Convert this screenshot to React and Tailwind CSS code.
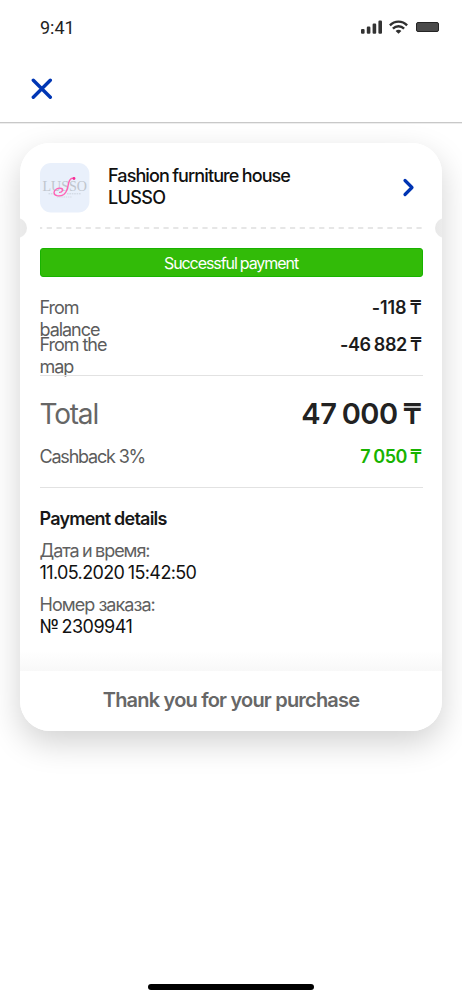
import React from 'react';

const balanceRows = [
  { label: 'From balance', value: '-118 ₸', valueSpacing: 'tracking-[-0.15px] [word-spacing:-1px]' },
  { label: 'From the map', value: '-46 882 ₸', valueSpacing: 'tracking-[-0.4px] [word-spacing:-1px]' },
];

const details = [
  { label: 'Дата и время:', value: '11.05.2020 15:42:50', labelSpacing: 'tracking-[-1.05px] [word-spacing:-0.6px]', valueSpacing: 'tracking-[-0.62px] [word-spacing:-1px]' },
  { label: 'Номер заказа:', value: '№ 2309941', labelSpacing: 'tracking-[-0.95px]', valueSpacing: 'tracking-[-0.55px] [word-spacing:-1.5px]' },
];

function StatusBar() {
  return (
    <div className="flex h-[56px] items-center justify-between pl-[40px] pr-[23px]">
      <span className="font-['Roboto'] text-[18px] leading-[22px] text-[#222]">9:41</span>
      <div className="flex items-center pb-[2px]">
        <svg width="22" height="14" viewBox="0 0 22 14" fill="#333">
          <rect x="0" y="9" width="3.6" height="4.8" rx="1.1" />
          <rect x="5.8" y="6.6" width="3.6" height="7.2" rx="1.1" />
          <rect x="11.6" y="3.6" width="3.6" height="10.2" rx="1.1" />
          <rect x="17.4" y="0.6" width="3.6" height="13.2" rx="1.1" />
        </svg>
        <svg className="ml-[6px]" width="19" height="14" viewBox="0 0 19 14" fill="none" stroke="#303030" strokeWidth="2.4">
          <path d="M0.9 5.4C5.8 0.4 13.2 0.4 18.1 5.4" />
          <path d="M3.9 8.6C7.1 5.5 11.9 5.5 15.1 8.6" />
          <path d="M6.6 10.9C8.3 9.5 10.7 9.5 12.4 10.9L9.5 13.8Z" fill="#303030" stroke="none" />
        </svg>
        <span className="ml-[8px] h-[10px] w-[23px] rounded-[2px] border border-[#242424] bg-[#4a4a4a]" />
      </div>
    </div>
  );
}

function LussoLogo() {
  return (
    <svg className="shrink-0" width="50" height="50" viewBox="0 0 50 50">
      <rect width="49.4" height="49.4" rx="11" fill="#e9f0fb" />
      <text x="2.5" y="27.5" fontFamily="Liberation Serif, serif" fontSize="14.5" fill="#bfc5cd" textLength="44.5" lengthAdjust="spacingAndGlyphs">
        LUSSO
      </text>
      <path
        d="M34 15.6C31.5 14.2 29.5 16.5 28.6 20C27.7 24 27.8 28.5 23.8 31.5C20 34 14.2 33.2 14 29.8C13.9 26.5 18.3 24.4 21.4 25.5C23.5 26.4 22.5 29.3 19.6 29.4"
        fill="none"
        stroke="#ff62b4"
        strokeWidth="1.4"
        strokeLinecap="round"
      />
      <circle cx="34" cy="15.5" r="1.4" fill="#f52c96" />
      <path d="M8.5 30.8H14M27 30.8H41" stroke="#c7ced8" strokeWidth="0.9" strokeDasharray="1.6 0.8" />
      <path d="M17 34H32" stroke="#d0d7e1" strokeWidth="0.9" strokeDasharray="1.4 0.8" />
    </svg>
  );
}

function Merchant() {
  return (
    <div className="flex h-[84px] items-start pt-[20px] pl-[19.5px] pr-[27px]">
      <LussoLogo />
      <div className="ml-[18.5px] mt-[1.5px] text-[18px] leading-[22px] font-medium text-[#101010]">
        <p className="tracking-[-0.9px] [word-spacing:-0.6px]">Fashion furniture house</p>
        <p className="tracking-[-0.6px]">LUSSO</p>
      </div>
      <svg className="ml-auto mt-[15px]" width="13" height="19" viewBox="0 0 13 19" fill="none">
        <path d="M3 2.5L10 9.5L3 16.5" stroke="#0034b3" strokeWidth="3.2" strokeLinecap="round" strokeLinejoin="round" />
      </svg>
    </div>
  );
}

export default function App() {
  return (
    <div className="min-h-[1000px] w-[462px] overflow-hidden bg-white flex flex-col font-['Inter',sans-serif] text-[#222]">
      <StatusBar />

      <div className="mb-[1px] flex h-[67px] items-start border-b border-[#c8c8c8] pl-[31px] pt-[22px] shadow-[0_1px_0_#ededed]">
        <svg width="22" height="22" viewBox="0 0 22 22" fill="none">
          <path d="M2.3 2.3L19.3 19.3M19.3 2.3L2.3 19.3" stroke="#0036b4" strokeWidth="3.4" strokeLinecap="round" />
        </svg>
      </div>

      {/* Receipt */}
      <div className="ml-[20px] mt-[19px] h-[588px] w-[422px] rounded-[30px] shadow-[0_12px_32px_rgba(0,0,0,0.18)]">
        <div className="relative flex h-full flex-col overflow-hidden rounded-[30px] bg-white">
          {/* Ticket notches */}
          <span className="absolute left-[-13px] top-[75px] size-[20px] rounded-full bg-linear-to-r from-[#f2f2f2] to-[#e8e8e8]" />
          <span className="absolute right-[-13px] top-[75px] size-[20px] rounded-full bg-linear-to-r from-[#e8e8e8] to-[#f2f2f2]" />

          <Merchant />
          <svg className="ml-[19.5px] shrink-0" width="383" height="2" viewBox="0 0 383 2">
            <path d="M0 1H383" stroke="#dedede" strokeWidth="1.6" strokeDasharray="5.2 4.53" strokeDashoffset="3" />
          </svg>

          <div className="flex flex-1 flex-col pl-[19.5px] pr-[19.5px] pt-[19px]">
            <div className="h-[29px] shrink-0 rounded-[3px] border border-[#18b300] bg-[#32bb08] text-center text-[16px] leading-[29px] tracking-[-1.06px] [word-spacing:-0.5px] text-white">
              Successful payment
            </div>

            <div className="mt-[20px] h-[78px] shrink-0 text-[18px] leading-[22px]">
              {balanceRows.map((row) => (
                <div key={row.label} className="flex h-[37px] items-start justify-between pr-[1px]">
                  <span className="w-[72px] tracking-[-1.05px] text-[#5c5c5c]">{row.label}</span>
                  <span className={`font-semibold text-[#1c1c1c] ${row.valueSpacing}`}>{row.value}</span>
                </div>
              ))}
            </div>

            <div className="h-[1px] shrink-0 bg-[#e2e2e2]" />

            <div className="mt-[19.5px] flex h-[36px] items-center justify-between pr-[1px]">
              <span className="text-[28px] tracking-[-1.2px] text-[#666]">Total</span>
              <span className="text-[29px] font-semibold tracking-[-0.5px] [word-spacing:-1.5px] text-[#222]">47 000 ₸</span>
            </div>
            <div className="mt-[13.5px] flex h-[22px] items-center justify-between pr-[1px] text-[18px]">
              <span className="tracking-[-1.2px] text-[#5c5c5c]">Cashback 3%</span>
              <span className="font-semibold tracking-[-0.4px] [word-spacing:-1.2px] text-[#17b300]">7 050 ₸</span>
            </div>

            <div className="mt-[20px] h-[1px] shrink-0 bg-[#e2e2e2]" />

            <h2 className="mt-[20px] text-[18px] leading-[22px] font-semibold tracking-[-0.78px] text-[#181818]">Payment details</h2>
            {details.map((item) => (
              <div key={item.label} className="mt-[10px] text-[18px] leading-[22px]">
                <p className={`text-[#606060] ${item.labelSpacing}`}>{item.label}</p>
                <p className={`text-[#111] ${item.valueSpacing}`}>{item.value}</p>
              </div>
            ))}
          </div>

          <div className="h-[20px] shrink-0 bg-linear-to-b from-white to-[#f8f8f8]" />
          <div className="h-[60px] shrink-0 text-center text-[20px] leading-[58px] font-semibold tracking-[-0.8px] text-[#676767]">
            Thank you for your purchase
          </div>
        </div>
      </div>

      {/* Home indicator */}
      <div className="mx-auto mb-[10px] mt-auto h-[6px] w-[166px] rounded-full bg-black" />
    </div>
  );
}
